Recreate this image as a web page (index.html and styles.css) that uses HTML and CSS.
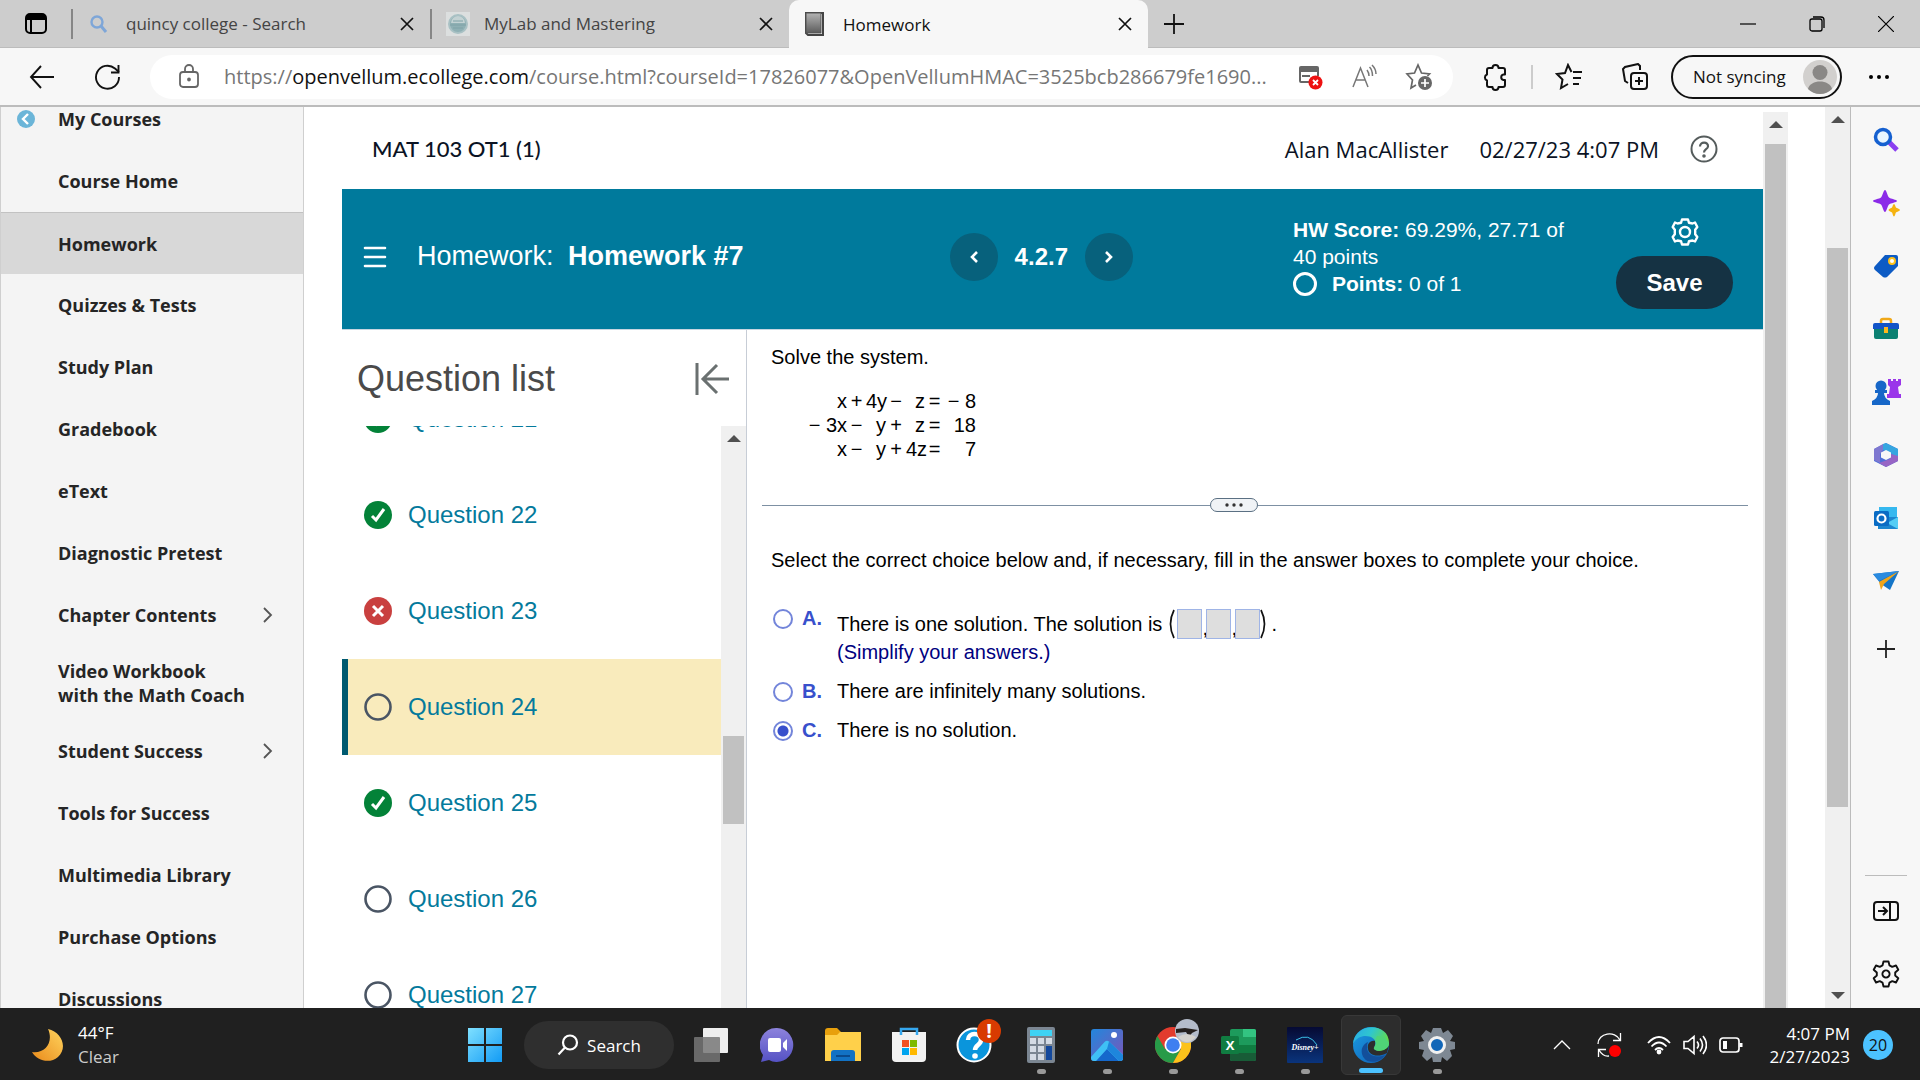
FILE: index.html
```html
<!DOCTYPE html>
<html lang="en">
<head>
<meta charset="utf-8">
<title>Homework</title>
<link rel="stylesheet" href="styles.css">
</head>
<body>
<header class="tabstrip">
  <button class="icon-btn tab-menu" aria-label="Tab actions"><svg width="24" height="24" viewBox="0 0 24 24"><rect x="2" y="2" width="20" height="19" rx="4" fill="none" stroke="#000" stroke-width="2"/><path d="M2 8V6a4 4 0 0 1 4-4h12a4 4 0 0 1 4 4v2z"/><path d="M7 8v13" stroke="#000" stroke-width="2"/></svg></button>
  <div class="tab">
    <svg width="20" height="20" viewBox="0 0 20 20" fill="none" stroke="#7ea6d8" stroke-width="2.4"><circle cx="8" cy="8" r="5.5"/><path d="M12 12l5 6" stroke-width="3"/></svg>
    <span class="tab-title">quincy college - Search</span>
    <button class="icon-btn" aria-label="Close tab"><svg width="14" height="14" viewBox="0 0 14 14" stroke="#111" stroke-width="1.7"><path d="M1 1l12 12M13 1L1 13"/></svg></button>
  </div>
  <div class="tab">
    <svg width="24" height="24" viewBox="0 0 24 24"><rect width="24" height="24" fill="#dcdfdf"/><circle cx="12" cy="12" r="9" fill="#8fb0b4" stroke="#a9c1c4" stroke-width="2"/><path d="M5 11a7 7 0 0 1 14 0z" fill="#c3d2d3"/><path d="M4 13h16M7 9h10M7 16h10" stroke="#7fa2a7"/></svg>
    <span class="tab-title">MyLab and Mastering</span>
    <button class="icon-btn" aria-label="Close tab"><svg width="14" height="14" viewBox="0 0 14 14" stroke="#111" stroke-width="1.7"><path d="M1 1l12 12M13 1L1 13"/></svg></button>
  </div>
  <div class="tab tab-active">
    <svg width="22" height="24" viewBox="0 0 22 24"><defs><linearGradient id="bk" x1="0" y1="0" x2="0" y2="1"><stop offset="0" stop-color="#b4b4b4"/><stop offset="1" stop-color="#5c5c5c"/></linearGradient></defs><path d="M2 1h17v22H4L2 21z" fill="#fff" stroke="#444" stroke-width="2"/><rect x="2" y="1" width="15" height="20" fill="url(#bk)" stroke="#555"/></svg>
    <span class="tab-title">Homework</span>
    <button class="icon-btn" aria-label="Close tab"><svg width="14" height="14" viewBox="0 0 14 14" stroke="#111" stroke-width="1.7"><path d="M1 1l12 12M13 1L1 13"/></svg></button>
  </div>
  <button class="icon-btn new-tab" aria-label="New tab"><svg width="22" height="22" viewBox="0 0 22 22" stroke="#111" stroke-width="1.8"><path d="M11 1v20M1 11h20"/></svg></button>
  <div class="window-controls">
    <button class="icon-btn" aria-label="Minimize"><svg width="16" height="16" viewBox="0 0 16 16" stroke="#000" stroke-width="1.2"><path d="M0 8h16"/></svg></button>
    <button class="icon-btn" aria-label="Restore"><svg width="16" height="16" viewBox="0 0 16 16" fill="none" stroke="#000" stroke-width="1.3"><rect x="1" y="3" width="12" height="12" rx="2"/><path d="M4 1h8a3 3 0 0 1 3 3v8"/></svg></button>
    <button class="icon-btn" aria-label="Close"><svg width="16" height="16" viewBox="0 0 16 16" stroke="#000" stroke-width="1.2"><path d="M0 0l16 16M16 0L0 16"/></svg></button>
  </div>
</header>

<div class="toolbar">
  <button class="icon-btn nav-btn" aria-label="Back"><svg width="26" height="24" viewBox="0 0 26 24" fill="none" stroke="#111" stroke-width="1.9"><path d="M12 1L2 12l10 11M2 12h23"/></svg></button>
  <button class="icon-btn nav-btn" aria-label="Refresh"><svg width="28" height="28" viewBox="0 0 28 28" fill="none" stroke="#111" stroke-width="1.9"><path d="M25 14a11.500 11.500 0 1 1-4-8.500L25 9"/><path d="M24.500 2v7.500H17"/></svg></button>
  <div class="address">
    <svg class="lock" width="20" height="26" viewBox="0 0 20 26" fill="none" stroke="#666" stroke-width="1.8"><rect x="1" y="8" width="18" height="15" rx="3"/><path d="M6 8V5a4 4 0 0 1 8 0v3"/><circle cx="10" cy="15.500" r="1" fill="#666"/></svg>
    <div class="url" role="textbox" aria-label="Address" contenteditable="true" spellcheck="false">https://<span class="url-host">openvellum.ecollege.com</span>/course.html?courseId=17826077&amp;OpenVellumHMAC=3525bcb286679fe1690...</div>
    <button class="icon-btn" aria-label="Pop-ups blocked"><svg width="26" height="26" viewBox="0 0 26 26"><path d="M2 4a2 2 0 0 1 2-2h16a2 2 0 0 1 2 2v4H2z" fill="#666"/><path d="M3 7v10a1 1 0 0 0 1 1h8M21 7v5M5 12h8" fill="none" stroke="#666" stroke-width="2"/><circle cx="18.500" cy="18.500" r="7" fill="#e11"/><path d="M16 16l5 5M21 16l-5 5" stroke="#fff" stroke-width="1.8"/></svg></button>
    <button class="icon-btn" aria-label="Read aloud"><svg width="26" height="26" viewBox="0 0 26 26" fill="none" stroke="#777" stroke-width="1.5"><path d="M2 23L9.500 4 17 23M5 16h9M16 6c1.500 2 2 3.500 2 6M18.500 3c2.500 2.500 3 5 3 9M21 1c3 3 4 6 4 9"/></svg></button>
    <button class="icon-btn" aria-label="Add to favorites"><svg width="28" height="28" viewBox="0 0 28 28" fill="none" stroke="#666" stroke-width="1.7"><path d="M11 22l-5 3 1.500-8L2 11l7.500-1L13 2l3.500 8 8 1-2 2"/><circle cx="20" cy="20" r="7" fill="#666" stroke="none"/><path d="M20 16v8M16 20h8" stroke="#fff"/></svg></button>
  </div>
  <button class="icon-btn ext" aria-label="Extensions"><svg width="28" height="28" viewBox="0 0 28 28" fill="none" stroke="#111" stroke-width="2" stroke-linejoin="round"><path d="M8 5h3.500a3 3 0 0 1 6 0H22a2 2 0 0 1 2 2v4.500h-1.500a2.800 2.800 0 0 0 0 5.500H24v5a2 2 0 0 1-2 2h-4.500a3 3 0 0 1-6 0H8a2 2 0 0 1-2-2v-4.500a3.200 3.200 0 0 1 0-6V7a2 2 0 0 1 2-2z"/></svg></button>
  <span class="tool-sep"></span>
  <button class="icon-btn fav" aria-label="Favorites"><svg width="28" height="28" viewBox="0 0 28 28" fill="none" stroke="#111" stroke-width="2"><path d="M13 21l-7 4 1.500-8.500L2 11l8-1 3-8 3.500 7M18 9h9M18 15h8M18 21h6"/></svg></button>
  <button class="icon-btn coll" aria-label="Collections"><svg width="28" height="28" viewBox="0 0 28 28" fill="none" stroke="#111" stroke-width="2"><rect x="10" y="10" width="16" height="16" rx="3"/><path d="M18 14v8M14 18h8M7 20l-3-2L2 6l2-2 13-3 2 2v4"/></svg></button>
  <button class="profile">Not syncing <svg width="34" height="34" viewBox="0 0 34 34"><circle cx="17" cy="17" r="17" fill="#d2d0ce"/><circle cx="17" cy="12.500" r="7.500" fill="#8a8886"/><path d="M5 29c2-10 22-10 24 0a17 17 0 0 1-24 0z" fill="#8a8886"/></svg></button>
  <button class="icon-btn more" aria-label="Settings and more"><svg width="22" height="6" viewBox="0 0 22 6"><circle cx="3" cy="3" r="2"/><circle cx="11" cy="3" r="2"/><circle cx="19" cy="3" r="2"/></svg></button>
</div>

<div class="viewport">
  <nav class="course-nav">
    <a class="nav-item nav-first" href="#"><svg class="nav-back" width="18" height="18" viewBox="0 0 18 18"><circle cx="9" cy="9" r="9" fill="#6bb5d8"/><path d="M11 4L6 9l5 5" fill="none" stroke="#fff" stroke-width="2.400"/></svg>My Courses</a>
    <a class="nav-item" href="#">Course Home</a>
    <a class="nav-item nav-current" href="#">Homework</a>
    <a class="nav-item" href="#">Quizzes &amp; Tests</a>
    <a class="nav-item" href="#">Study Plan</a>
    <a class="nav-item" href="#">Gradebook</a>
    <a class="nav-item" href="#">eText</a>
    <a class="nav-item" href="#">Diagnostic Pretest</a>
    <a class="nav-item" href="#">Chapter Contents<svg class="nav-more" width="10" height="16" viewBox="0 0 10 16" fill="none" stroke="#555" stroke-width="1.8"><path d="M1 1l7 7-7 7"/></svg></a>
    <a class="nav-item" href="#">Video Workbook<br>with the Math Coach</a>
    <a class="nav-item" href="#">Student Success<svg class="nav-more" width="10" height="16" viewBox="0 0 10 16" fill="none" stroke="#555" stroke-width="1.8"><path d="M1 1l7 7-7 7"/></svg></a>
    <a class="nav-item" href="#">Tools for Success</a>
    <a class="nav-item" href="#">Multimedia Library</a>
    <a class="nav-item" href="#">Purchase Options</a>
    <a class="nav-item" href="#">Discussions</a>
  </nav>

  <div class="frame">
    <main class="player">
      <div class="course-head">
        <h1 class="course-title">MAT 103 OT1 (1)</h1>
        <span>Alan MacAllister</span>
        <span>02/27/23 4:07 PM</span>
        <button class="icon-btn" aria-label="Help"><svg width="28" height="28" viewBox="0 0 28 28" fill="none" stroke="#555c5c" stroke-width="2"><circle cx="14" cy="14" r="12.500"/><path d="M10 11.500c0-5.500 8.500-5 8 0-.3 3-4 2.500-4 6" stroke-width="2.200"/><circle cx="14" cy="21" r=".8" fill="#555c5c"/></svg></button>
      </div>
      <section class="banner">
        <button class="icon-btn menu" aria-label="Menu"><svg width="24" height="22" viewBox="0 0 24 22" stroke="#fff" stroke-width="2.600" stroke-linecap="round"><path d="M2 2h20M2 11h20M2 20h20"/></svg></button>
        <h2 class="hw-title">Homework: <b>Homework #7</b></h2>
        <div class="pager">
          <button class="round" aria-label="Previous question"><svg width="10" height="14" viewBox="0 0 10 14" fill="none" stroke="#fff" stroke-width="2.600"><path d="M8 2L3 7l5 5"/></svg></button>
          <b class="pager-num">4.2.7</b>
          <button class="round" aria-label="Next question"><svg width="10" height="14" viewBox="0 0 10 14" fill="none" stroke="#fff" stroke-width="2.600"><path d="M2 2l5 5-5 5"/></svg></button>
        </div>
        <div class="score">
          <div><b>HW Score:</b> 69.29%, 27.71 of 40 points</div>
          <div class="points"><span class="points-ring"></span><span><b>Points:</b> 0 of 1</span></div>
        </div>
        <div class="banner-actions">
          <button class="icon-btn gear" aria-label="Settings"><svg width="28" height="28" viewBox="-14 -14 28 28" fill="none" stroke="#fff" stroke-width="2.400" stroke-linejoin="round"><path d="M-3-12.500H3L4-9.200 7.500-8.500 10-9.500 12.300-5 10.200-2.300V2.300L12.300 5 10 9.500 7.500 8.500 4 9.200 3 12.500H-3L-4 9.200-7.500 8.500-10 9.500-12.300 5-10.200 2.300V-2.300L-12.300-5-10-9.500-7.500-8.500-4-9.200z"/><circle r="5"/></svg></button>
          <button class="save">Save</button>
        </div>
      </section>
      <div class="work">
        <aside class="questions">
          <div class="q-head"><h3 class="q-title">Question list</h3>
            <button class="icon-btn" aria-label="Collapse list"><svg width="34" height="32" viewBox="0 0 34 32" fill="none" stroke="#6a7070" stroke-width="3"><path d="M2 0v32M22 2L8 16l14 14M8 16h26"/></svg></button></div>
          <div class="q-body">
            <ul class="q-list">
              <li class="q-row"><svg class="q-ic" viewBox="0 0 28 28"><circle cx="14" cy="14" r="14" fill="#038238"/><path d="M8 15l4 4 8-11" fill="none" stroke="#fff" stroke-width="3"/></svg><a href="#">Question 21</a></li>
              <li class="q-row"><svg class="q-ic" viewBox="0 0 28 28"><circle cx="14" cy="14" r="14" fill="#038238"/><path d="M8 15l4 4 8-11" fill="none" stroke="#fff" stroke-width="3"/></svg><a href="#">Question 22</a></li>
              <li class="q-row"><svg class="q-ic" viewBox="0 0 28 28"><circle cx="14" cy="14" r="14" fill="#c9403f"/><path d="M9 9l10 10M19 9L9 19" stroke="#fff" stroke-width="3"/></svg><a href="#">Question 23</a></li>
              <li class="q-row q-current"><svg class="q-ic" viewBox="0 0 28 28"><circle cx="14" cy="14" r="12.500" fill="none" stroke="#4a5564" stroke-width="2.600"/></svg><a href="#">Question 24</a></li>
              <li class="q-row"><svg class="q-ic" viewBox="0 0 28 28"><circle cx="14" cy="14" r="14" fill="#038238"/><path d="M8 15l4 4 8-11" fill="none" stroke="#fff" stroke-width="3"/></svg><a href="#">Question 25</a></li>
              <li class="q-row"><svg class="q-ic" viewBox="0 0 28 28"><circle cx="14" cy="14" r="12.500" fill="none" stroke="#4a5564" stroke-width="2.600"/></svg><a href="#">Question 26</a></li>
              <li class="q-row"><svg class="q-ic" viewBox="0 0 28 28"><circle cx="14" cy="14" r="12.500" fill="none" stroke="#4a5564" stroke-width="2.600"/></svg><a href="#">Question 27</a></li>
            </ul>
            <div class="scroll"><span class="arrow-up"></span><span class="thumb thumb-list"></span></div>
          </div>
        </aside>
        <section class="problem">
          <p class="line">Solve the system.</p>
          <div class="system">
            <span>x</span><i>+</i><span>4y</span><i>−</i><span>z</span><i>=</i><span>− 8</span>
            <span>− 3x</span><i>−</i><span>y</span><i>+</i><span>z</span><i>=</i><span>18</span>
            <span>x</span><i>−</i><span>y</span><i>+</i><span>4z</span><i>=</i><span>7</span>
          </div>
          <div class="divider"><button class="handle" aria-label="Resize"><svg width="20" height="4" viewBox="0 0 20 4" fill="#333"><circle cx="3" cy="2" r="1.700"/><circle cx="10" cy="2" r="1.700"/><circle cx="17" cy="2" r="1.700"/></svg></button></div>
          <p class="line">Select the correct choice below and, if necessary, fill in the answer boxes to complete your choice.</p>
          <form class="choices">
            <div class="choice"><input type="radio" name="c" id="ca"><label class="letter" for="ca">A.</label>
              <div><div class="tuple"><label for="ca">There is one solution. The solution is</label>
                <svg class="paren" width="6" height="30" viewBox="0 0 6 30" fill="none" stroke="#111" stroke-width="1.700"><path d="M5 1Q-2 15 5 29"/></svg><input class="box" aria-label="x"><span class="comma">,</span><input class="box" aria-label="y"><span class="comma">,</span><input class="box" aria-label="z"><svg width="6" height="30" viewBox="0 0 6 30" fill="none" stroke="#111" stroke-width="1.700"><path d="M1 1Q8 15 1 29"/></svg><span class="stop">.</span></div>
                <div class="hint">(Simplify your answers.)</div></div></div>
            <div class="choice"><input type="radio" name="c" id="cb"><label class="letter" for="cb">B.</label><label for="cb">There are infinitely many solutions.</label></div>
            <div class="choice"><input type="radio" name="c" id="cc" checked><label class="letter" for="cc">C.</label><label for="cc">There is no solution.</label></div>
          </form>
        </section>
      </div>
    </main>
    <div class="scroll"><span class="arrow-up"></span><span class="thumb thumb-frame"></span></div>
  </div>
  <div class="scroll scroll-page"><span class="arrow-up"></span><span class="thumb thumb-page"></span><span class="arrow-down"></span></div>

  <aside class="edge-bar">
    <button class="icon-btn" aria-label="Search"><svg width="26" height="26" viewBox="0 0 26 26" fill="none"><path d="M16 15l8 8" stroke="#8a3ff0" stroke-width="5"/><circle cx="10" cy="10" r="7.500" fill="#e8f5ff" stroke="#1560d0" stroke-width="3.500"/></svg></button>
    <button class="icon-btn" aria-label="Discover"><svg width="28" height="28" viewBox="0 0 28 28"><path d="M13 1c1.500 0 2.500 6 4 7.500S25 10.500 25 12s-6.500 2-8 3.500S14.500 23 13 23s-2.500-6-4-7.500S1 13.500 1 12s6.500-2 8-3.500S11.500 1 13 1z" fill="#8b2be8"/><path d="M22 15c1 0 1.500 3 2 3.500s4 1.500 4 2.500-3.500 2-4 2.500-1 4-2 4-1.500-3.500-2-4-3.500-1.500-3.500-2.500 3-2 3.500-2.500 1-3.500 2-3.500z" fill="#f5b310"/></svg></button>
    <button class="icon-btn" aria-label="Shopping"><svg width="26" height="26" viewBox="0 0 26 26"><path d="M12 2h11a2 2 0 0 1 2 2v9L14 24q-2 1-4 0L2 17q-2-2 0-4z" fill="#0d5bc4"/><circle cx="19" cy="8" r="3" fill="#fff" stroke="#ffc21a" stroke-width="2"/></svg></button>
    <button class="icon-btn" aria-label="Tools"><svg width="28" height="24" viewBox="0 0 28 24"><path d="M9 7V4q0-2 2-2h6q2 0 2 2v3" fill="none" stroke="#f0a818" stroke-width="2.500"/><rect x="2" y="9" width="24" height="13" rx="2" fill="#0b8072"/><path d="M1 8q0-2 2-2h22q2 0 2 2v4H1z" fill="#1254c8"/><rect x="12" y="10" width="4" height="6" fill="#ffb81c"/></svg></button>
    <button class="icon-btn" aria-label="Games"><svg width="30" height="28" viewBox="0 0 30 28"><path d="M17 1h3v2h2V1h3v2h2V1h3v6l-3 2 1 7h2v4H16v-4h2l1-7-2-2z" fill="#9a35ea"/><circle cx="10" cy="8" r="5.500" fill="#1767c8"/><path d="M4 12h12v3h-3q0 5 6 8v4H1v-4q6-3 6-8H4z" fill="#1767c8"/></svg></button>
    <button class="icon-btn" aria-label="Microsoft 365"><svg width="26" height="26" viewBox="0 0 26 26"><path d="M13 1l12 6v12l-12 6-12-6V7z" fill="#4f6ed8"/><path d="M10 2l3-1 12 6v9l-8-5-7-3z" fill="#36a6e0"/><path d="M25 14v5l-12 6-7-4 11-4 1-5z" fill="#9765c5"/><path d="M1 7l9-5v6l-3 4v9l-6-3z" fill="#7f78d0"/><path d="M13 8l5 2.500v5L13 18l-5-2.500v-5z" fill="#f7f7f7"/></svg></button>
    <button class="icon-btn" aria-label="Outlook"><svg width="26" height="24" viewBox="0 0 26 24"><rect x="6" y="1" width="18" height="12" fill="#35b8ef"/><path d="M5 11h20v12H5z" fill="#1b86d0"/><path d="M25 11v12L14 17z" fill="#53cdf5"/><rect x="1" y="5" width="15" height="15" rx="1.500" fill="#0a6cc4"/><circle cx="8.500" cy="12.500" r="4" fill="none" stroke="#fff" stroke-width="2.200"/></svg></button>
    <button class="icon-btn" aria-label="Drop"><svg width="28" height="22" viewBox="0 0 28 22"><path d="M1 4l26-3-9 19-9-6z" fill="#1475c8"/><path d="M27 1L7 12l2 8 3-6z" fill="#f0a51a"/><path d="M1 4l26-3L7 11z" fill="#2a8be0"/></svg></button>
    <button class="icon-btn add" aria-label="Add app"><svg width="20" height="20" viewBox="0 0 20 20" stroke="#222" stroke-width="1.800"><path d="M10 1v18M1 10h18"/></svg></button>
    <div class="edge-bottom">
      <button class="icon-btn" aria-label="Hide sidebar"><svg width="26" height="20" viewBox="0 0 26 20" fill="none" stroke="#111" stroke-width="2"><rect x="1" y="1" width="24" height="18" rx="3"/><path d="M17 1v18M5 10h9M10 6l4 4-4 4"/></svg></button>
      <button class="icon-btn" aria-label="Sidebar settings"><svg width="28" height="28" viewBox="-14 -14 28 28" fill="none" stroke="#111" stroke-width="1.900" stroke-linejoin="round"><path d="M-2.500-12.500H2.500L3.500-8.600 6.200-7.200 10-8.500 12.300-4.300 9.200-1.500V1.500L12.300 4.300 10 8.500 6.200 7.200 3.500 8.600 2.500 12.500H-2.500L-3.500 8.600-6.200 7.200-10 8.500-12.300 4.300-9.200 1.500V-1.500L-12.300-4.300-10-8.500-6.200-7.200-3.500-8.600z"/><circle r="3.600"/></svg></button>
    </div>
  </aside>
</div>

<footer class="taskbar">
  <div class="weather"><svg width="34" height="34" viewBox="0 0 34 34"><defs><linearGradient id="mo" x1="1" y1="0" x2="0" y2="1"><stop offset="0" stop-color="#ffd45e"/><stop offset="1" stop-color="#e98a1b"/></linearGradient></defs><path d="M17 1c14 3 20 19 10 28-8 7-21 4-26-5 13 2 22-10 16-23z" fill="url(#mo)"/></svg>
    <div><div>44°F</div><div class="dim">Clear</div></div></div>
  <div class="apps">
    <button class="app" aria-label="Start"><svg width="36" height="36" viewBox="0 0 36 36"><defs><linearGradient id="wi" x1="0" y1="0" x2="1" y2="1"><stop offset="0" stop-color="#7fe0ff"/><stop offset="1" stop-color="#129bf5"/></linearGradient></defs><path d="M1 1h16v16H1zM19 1h16v16H19zM1 19h16v16H1zM19 19h16v16H19z" fill="url(#wi)"/></svg></button>
    <button class="search"><svg width="22" height="22" viewBox="0 0 22 22" fill="none" stroke="#fff" stroke-width="2.200"><circle cx="13" cy="8.500" r="7"/><path d="M8 13.500L1.500 20.500"/></svg>Search</button>
    <button class="app" aria-label="Task view"><svg width="36" height="36" viewBox="0 0 36 36"><rect x="10" y="1" width="25" height="25" rx="1" fill="#eee"/><rect x="1" y="10" width="26" height="25" rx="1" fill="#777" fill-opacity=".85"/></svg></button>
    <button class="app" aria-label="Chat"><svg width="34" height="36" viewBox="0 0 34 36"><defs><linearGradient id="ch" x1="0" y1="0" x2="0" y2="1"><stop offset="0" stop-color="#8d83dc"/><stop offset="1" stop-color="#5552c4"/></linearGradient></defs><path d="M17 1a16.500 17 0 1 1-8 32L1 35l2-7A16.500 17 0 0 1 17 1z" fill="url(#ch)"/><rect x="8" y="11" width="13" height="14" rx="2" fill="#fff"/><path d="M23 16l4-4v12l-4-4z" fill="#fff"/></svg></button>
    <button class="app" aria-label="File Explorer"><svg width="36" height="36" viewBox="0 0 36 36"><path d="M0 4q0-3 3-3h9l4 4v6H0z" fill="#e8a00c"/><path d="M0 8h12l3-3h21v29H0z" fill="#ffd04a"/><path d="M6 34v-8q0-3 3-3h18q3 0 3 3v8z" fill="#1272c4"/><path d="M11 29h14" stroke="#0a4a8c" stroke-width="2"/></svg></button>
    <button class="app" aria-label="Store"><svg width="36" height="36" viewBox="0 0 36 36"><path d="M1 5h34v26q0 4-4 4H5q-4 0-4-4z" fill="#f2f2f2"/><path d="M10 8V2h16v6" fill="none" stroke="#35a8f0" stroke-width="2.500"/><path d="M11 13h7v7h-7z" fill="#f25022"/><path d="M19 13h7v7h-7z" fill="#7fba00"/><path d="M11 21h7v7h-7z" fill="#00a4ef"/><path d="M19 21h7v7h-7z" fill="#ffb900"/></svg></button>
    <button class="app" aria-label="Get Help"><svg width="38" height="38" viewBox="0 0 38 38"><circle cx="18" cy="19" r="16.500" fill="#0a95dc" stroke="#fff" stroke-width="2"/><path d="M12 14c0-8 13-8 13 0 0 5-6 5-6 10" fill="none" stroke="#fff" stroke-width="4.500"/><circle cx="19" cy="30" r="2.800" fill="#fff"/></svg><span class="alert">!</span></button>
    <button class="app run" aria-label="Calculator"><svg width="28" height="36" viewBox="0 0 28 36"><rect width="28" height="36" rx="2" fill="#7b8692"/><rect x="3" y="3" width="22" height="6" fill="#3ed3f5"/><path d="M3 11h6v6H3zM11 11h6v6h-6zM19 11h6v6h-6zM3 19h6v6H3zM11 19h6v6h-6zM3 27h6v6H3zM11 27h6v6h-6z" fill="#d4dbe4"/><rect x="19" y="19" width="6" height="14" fill="#13489c"/></svg></button>
    <button class="app run" aria-label="Photos"><svg width="32" height="32" viewBox="0 0 32 32"><defs><linearGradient id="ph" x1="0" y1="0" x2="1" y2="1"><stop offset="0" stop-color="#2187dd"/><stop offset="1" stop-color="#7d55b8"/></linearGradient></defs><rect width="32" height="32" rx="3" fill="url(#ph)"/><path d="M5 32L16 19l16 10q0 3-3 3z" fill="#1568cc"/><path d="M0 28L14 12.500q2-1.500 4 0L32 26v3q0 3-3 3h-1L16 20 5 32H3q-3 0-3-3z" fill="#3fc0f5"/><path d="M16 20l2-7.500L32 26v3q0 3-3 3h-1z" fill="#1e86dc"/><circle cx="23" cy="6" r="3" fill="#fff"/></svg></button>
    <button class="app run" aria-label="Chrome"><svg width="36" height="36" viewBox="0 0 36 36"><circle cx="18" cy="18" r="18" fill="#e23b2e"/><path d="M2.400 9A18 18 0 0 0 18 36l8-14H10z" fill="#279b48"/><path d="M33.600 9A18 18 0 0 1 18 36l8-14V9z" fill="#fcc21b"/><circle cx="18" cy="18" r="8.500" fill="#fff"/><circle cx="18" cy="18" r="6.800" fill="#3f7ff0"/></svg><svg class="avatar" width="24" height="24" viewBox="0 0 24 24"><circle cx="12" cy="12" r="12" fill="#b4bccb"/><path d="M1 10l9-1 13 2-6 3-3 4-3-5-10 1z" fill="#26211f"/><path d="M3 18q9-6 18 0-9 10-18 0z" fill="#d5d2cd"/></svg></button>
    <button class="app run" aria-label="Excel"><svg width="36" height="32" viewBox="0 0 36 32"><rect x="9" width="26" height="32" rx="2" fill="#1d9b5c"/><path d="M22 0h11q2 0 2 2v6H22z" fill="#33c481"/><path d="M9 16h26v8H9z" fill="#107c41"/><path d="M9 24h26v6q0 2-2 2H11q-2 0-2-2z" fill="#185c37"/><rect y="7" width="18" height="18" rx="1.500" fill="#107c41"/><text x="9" y="21" text-anchor="middle" class="glyph">X</text></svg></button>
    <button class="app run" aria-label="Disney+"><svg width="36" height="36" viewBox="0 0 36 36"><defs><linearGradient id="di" x1="0" y1="0" x2="0" y2="1"><stop offset="0" stop-color="#060a33"/><stop offset="1" stop-color="#0a347c"/></linearGradient></defs><rect width="36" height="36" rx="1" fill="url(#di)"/><path d="M9 13q13-8 21 5" fill="none" stroke="#3ac0e8" stroke-width="1"/><text x="18" y="23" text-anchor="middle" class="disney">Disney+</text></svg></button>
    <button class="app run app-active" aria-label="Edge"><svg width="36" height="36" viewBox="0 0 36 36"><defs><linearGradient id="e1" x1="0" y1="0" x2="1" y2=".4"><stop offset="0" stop-color="#28a9e8"/><stop offset=".5" stop-color="#2fc6cf"/><stop offset="1" stop-color="#63db4c"/></linearGradient><linearGradient id="e2" x1="0" y1="0" x2="1" y2="1"><stop offset="0" stop-color="#1b9de2"/><stop offset="1" stop-color="#0f5cb4"/></linearGradient></defs><circle cx="18" cy="18" r="18" fill="url(#e2)"/><path d="M0 17C2-5 36-5 36 16c0 8-9 10-14 7-2-2 1-3 1-7-1-8-17-11-23 1z" fill="url(#e1)"/><path d="M15 15c-4 10 4 18 17 13-5 8-17 9-21 3-4-5-3-13 4-16z" fill="#134f9b"/><path d="M22 14c-5-1-8 3-7 8 1 6 9 9 19 4l2-8c-3 6-10 7-14 5-2-2 1-4 0-9z" fill="#2d2d2d"/><path d="M22 14c2 4-2 6-1 8 3 3 15 2 15-6l-4-6-8-1z" fill="#4fd477"/></svg></button>
    <button class="app run" aria-label="Settings"><svg width="36" height="36" viewBox="-18 -18 36 36"><path d="M-4-17H4L6-12 11-15 16-9 13-4 18-3V4L13 5 15 11 10 16 5 12 4 17H-4L-5 12-10 16-15 11-13 5-18 4V-3L-13-4-16-9-11-15-6-12z" fill="#7e8893"/><circle r="7.500" fill="#1166b8" stroke="#f1f1f1" stroke-width="3"/></svg></button>
  </div>
  <div class="tray">
    <svg class="t-chev" width="18" height="10" viewBox="0 0 18 10" fill="none" stroke="#fff" stroke-width="1.300"><path d="M1 9l8-8 8 8"/></svg>
    <svg class="t-sync" width="26" height="26" viewBox="0 0 26 26" fill="none" stroke="#fff" stroke-width="1.300"><path d="M1 12C1 1 18-2 23 8M23.500 1v7.500H16M1.500 25v-7.500H9M2 18q4 7 10 6"/><circle cx="18" cy="19" r="6" fill="red" stroke="none"/></svg>
    <svg width="24" height="20" viewBox="0 0 24 20" fill="none" stroke="#fff" stroke-width="1.800"><path d="M1 8q11-12 22 0M4.500 11.500q7.500-8 15 0M8 15q4-4 8 0"/><circle cx="12" cy="17" r="1.500" fill="#fff"/></svg>
    <svg width="24" height="22" viewBox="0 0 24 22" fill="none" stroke="#fff" stroke-width="1.600"><path d="M1 7.500h4l6-5v17l-6-5H1zM14 7.500q3 3.500 0 7M17 4.500q5 6.500 0 13M20 2q7 9 0 18"/></svg>
    <svg width="24" height="16" viewBox="0 0 24 16" fill="none" stroke="#fff" stroke-width="1.700"><rect x="1" y="1" width="19" height="14" rx="3"/><rect x="4" y="4" width="4" height="8" fill="#fff" stroke="none"/><path d="M22 6v4" stroke-width="3"/></svg>
    <div class="clock"><div>4:07 PM</div><div>2/27/2023</div></div>
    <button class="notif">20</button>
  </div>
</footer>
</body>
</html>
```
FILE: styles.css
```css
* { box-sizing: border-box; }
body { margin: 0; height: 100vh; display: flex; flex-direction: column; overflow: hidden; background: #fff; font-family: "Open Sans", "Noto Sans", sans-serif; font-size: 17px; color: #111; }
button { font: inherit; color: inherit; border: 0; background: none; padding: 0; }
.icon-btn { display: inline-flex; align-items: center; justify-content: center; flex: none; }
svg { display: block; flex: none; }
a { color: inherit; text-decoration: none; }
h1, h2, h3, p { margin: 0; font-weight: 400; }

/* tab strip */
.tabstrip { flex: none; height: 48px; display: flex; align-items: center; background: #cdcdcd; border-bottom: 1px solid #bcbcbc; }
.tab-menu { width: 71px; }
.tab { width: 359px; height: 30px; display: flex; align-items: center; gap: 17px; padding: 0 16px; border-left: 2px solid #868686; color: #444; }
.tab + .tab { padding-left: 14px; gap: 14px; }
.tab .tab-title { flex: 1; white-space: nowrap; }
.tab.tab-active { align-self: stretch; height: 48px; border-left: 0; border-radius: 10px 10px 0 0; background: #f7f7f7; color: #111; padding-left: 15px; gap: 17px; }
.new-tab { width: 52px; }
.window-controls { margin-left: auto; display: flex; }
.window-controls .icon-btn { width: 69px; }

/* toolbar */
.toolbar { flex: none; height: 59px; display: flex; align-items: center; background: #f7f7f7; border-bottom: 2px solid #bcbcbc; padding-left: 9px; }
.nav-btn { width: 66px; }
.address { flex: 1; height: 44px; margin-left: 9px; display: flex; align-items: center; gap: 28px; padding: 0 20px 0 29px; border-radius: 22px; background: #fff; }
.lock { margin-right: -3px; }
.url { flex: 1; min-width: 0; overflow: hidden; white-space: nowrap; font-size: 20px; color: #767676; }
.url-host { color: #111; }
.ext { width: 72px; margin-left: 6px; }
.tool-sep { width: 2px; height: 24px; background: #ccc; }
.fav { width: 72px; }
.coll { width: 60px; }
.profile { width: 171px; height: 44px; margin-left: 6px; display: flex; align-items: center; justify-content: space-between; padding: 0 3px 0 20px; border: 2px solid #111; border-radius: 22px; white-space: nowrap; }
.more { width: 74px; margin-right: 4px; }

/* page */
.viewport { flex: 1; min-height: 0; display: flex; overflow: hidden; }
.course-nav { flex: none; width: 304px; overflow: hidden; background: #f4f4f4; border: solid #cfcfcf; border-width: 0 1px; font-size: 18px; font-weight: 700; line-height: 24px; color: #252525; }
.nav-item { display: flex; align-items: center; min-height: 62px; padding: 13px 30px 13px 57px; }
.nav-first { min-height: 43px; padding: 0 0 19px 16px; }
.nav-back { margin-right: 23px; }
.nav-current { background: #d8d8d8; border-top: 1px solid #c2c2c2; }
.nav-more { margin-left: auto; }
.frame { flex: 1; min-width: 0; display: flex; padding: 5px 37px 0 38px; }
.player { flex: 1; min-width: 0; display: flex; flex-direction: column; }
.course-head { flex: none; height: 77px; display: flex; align-items: center; gap: 31px; padding: 0 45px 3px 30px; font-size: 22px; line-height: 28px; color: #0b1324; }
.course-title { margin-right: auto; font-family: Lato, "Open Sans", sans-serif; font-size: 22px; font-weight: 500; }
.banner { flex: none; display: flex; align-items: center; height: 141px; padding: 0 30px 5px 20px; background: #007a9c; border-bottom: 1px solid #c7d5e0; color: #fff; font-family: "Liberation Sans", Arial, sans-serif; font-size: 21px; line-height: 27px; }
.menu { width: 26px; }
.hw-title { margin-left: 29px; font-size: 27px; }
.hw-title b { margin-left: 7px; }
.pager { display: flex; align-items: center; gap: 17px; margin: 0 160px 0 auto; }
.pager-num { font-size: 24px; }
.round { width: 48px; height: 48px; display: flex; align-items: center; justify-content: center; border-radius: 50%; background: #07617c; }
.score { width: 290px; }
.points { display: flex; align-items: center; gap: 15px; }
.points-ring { width: 24px; height: 24px; border: 3px solid #fff; border-radius: 50%; }
.banner-actions { align-self: flex-end; width: 117px; margin: 0 0 15px 33px; display: flex; flex-direction: column; align-items: center; gap: 10px; }
.gear { margin-left: 20px; }
.save { width: 117px; height: 53px; border-radius: 27px; background: #153243; font-size: 24px; font-weight: 700; }
.work { flex: 1; min-height: 0; display: flex; font-family: "Liberation Sans", Arial, sans-serif; }

/* question list */
.questions { flex: none; width: 405px; display: flex; flex-direction: column; border-right: 1px solid #c7cdd6; }
.q-head { flex: none; height: 96px; display: flex; align-items: center; justify-content: space-between; padding: 2px 17px 0 15px; }
.q-title { font-size: 36px; color: #4a4a4a; }
.q-body { flex: 1; min-height: 0; display: flex; overflow: hidden; }
.q-list { flex: 1; list-style: none; margin: -55px 0 0; padding: 0; font-size: 24px; color: #047a9c; }
.q-row { height: 96px; display: flex; align-items: center; gap: 16px; padding-left: 22px; }
.q-current { padding-left: 16px; border-left: 6px solid #005a70; background: #f9ebbc; }
.q-ic { width: 28px; height: 28px; }

/* scrollbars */
.scroll { flex: none; width: 25px; display: flex; flex-direction: column; align-items: center; background: #f0f0f0; }
.arrow-up, .arrow-down { flex: none; border: 7px solid transparent; width: 0; height: 0; }
.arrow-up { border-top: 0; border-bottom-color: #505050; margin: 9px 0; }
.arrow-down { border-bottom: 0; border-top-color: #505050; margin-top: auto; margin-bottom: 9px; }
.thumb { flex: none; width: 21px; background: #c1c1c1; }
.thumb-list { margin-top: 285px; height: 88px; }
.thumb-frame { margin-top: 7px; flex: 1; }
.thumb-page { margin-top: 116px; height: 62%; }
.scroll-page { width: 26px; border-right: 1px solid #bcbcbc; }

/* problem */
.problem { flex: 1; min-width: 0; padding: 14px 15px 0 15px; font-size: 20px; line-height: 27px; color: #000; }
.line { padding-left: 9px; white-space: nowrap; }
.system { display: grid; grid-template-columns: 46px 19px 20px 20px 19px 19px 32px; margin: 18px 0 37px 39px; line-height: 24px; white-space: nowrap; }
.system span { text-align: right; }
.system i { font-style: normal; text-align: center; }
.divider { display: flex; align-items: center; margin-bottom: 35px; }
.divider::before, .divider::after { content: ""; flex: 1; height: 1px; background: #7d90a3; }
.divider::after { flex: 1 1 42px; }
.handle { width: 48px; height: 14px; display: flex; align-items: center; justify-content: center; border: 1px solid #5b7083; border-radius: 7px; background: #f0f3f6; }
.choices { display: flex; flex-direction: column; gap: 12px; padding: 31px 0 0 11px; }
.choice { display: flex; align-items: flex-start; }
.choice input[type="radio"] { appearance: none; width: 20px; height: 20px; margin: 4px 9px 0 0; border: 2px solid #7385da; border-radius: 50%; background: #fff; }
.choice input[type="radio"]:checked { background: radial-gradient(circle, #3850cc 5px, #fff 6px); }
.letter { width: 35px; font-weight: 700; color: #3850cc; }
.tuple { display: flex; align-items: center; height: 30px; margin-top: 4px; }
.paren { margin: 0 2px 0 7px; }
.box { width: 25px; height: 30px; border: 1px solid #9fb4e6; background: #dedede; padding: 0; }
.comma { width: 4px; margin-top: 8px; overflow: visible; }
.stop { margin-left: 5px; }
.hint { color: #00007f; }

/* edge sidebar */
.edge-bar { flex: none; width: 69px; display: flex; flex-direction: column; align-items: center; padding-top: 1px; background: #f7f7f7; }
.edge-bar .icon-btn { width: 63px; height: 63px; }
.edge-bar .add { margin-top: 5px; }
.edge-bottom { margin-top: auto; padding-top: 3px; border-top: 1px solid #bcbcbc; width: 42px; display: flex; flex-direction: column; align-items: center; margin-bottom: 3px; }

/* taskbar */
.taskbar { flex: none; height: 72px; display: flex; align-items: center; padding-top: 2px; background: #202020; color: #fff; }
.weather { flex: 1; display: flex; align-items: center; gap: 13px; padding-left: 31px; line-height: 24px; }
.dim { color: #ccc; }
.apps { display: flex; align-items: center; gap: 6px; margin-right: 2px; }
.app { position: relative; width: 60px; height: 60px; display: flex; align-items: center; justify-content: center; border-radius: 6px; }
.search { width: 150px; height: 48px; margin: 0 1px 0 3px; display: flex; align-items: center; justify-content: center; gap: 8px; border-radius: 24px; background: #2f2f2f; }
.alert { position: absolute; top: 4px; right: 4px; width: 24px; height: 24px; border-radius: 50%; background: #d83b01; font: 700 20px/24px "Open Sans", sans-serif; }
.avatar { position: absolute; top: 4px; right: 4px; }
.run::after { content: ""; position: absolute; bottom: 1px; width: 9px; height: 5px; border-radius: 3px; background: #999; }
.app-active { background: #2d2d2d; border: 1px solid #383838; }
.app-active::after { width: 24px; background: #4cc2ff; }
.glyph { font: 700 13px "Open Sans", sans-serif; fill: #fff; }
.disney { font: italic 700 8px "Liberation Serif", serif; fill: #fff; }
.tray { flex: 1; display: flex; align-items: center; justify-content: flex-end; gap: 12px; padding-right: 27px; line-height: 23px; }
.t-chev { margin-right: 14px; }
.t-sync { margin-right: 12px; }
.clock { width: 95px; text-align: right; white-space: nowrap; }
.notif { width: 30px; height: 30px; border-radius: 50%; background: #4cc2ff; color: #111; font-size: 16px; margin-left: 1px; }
```
